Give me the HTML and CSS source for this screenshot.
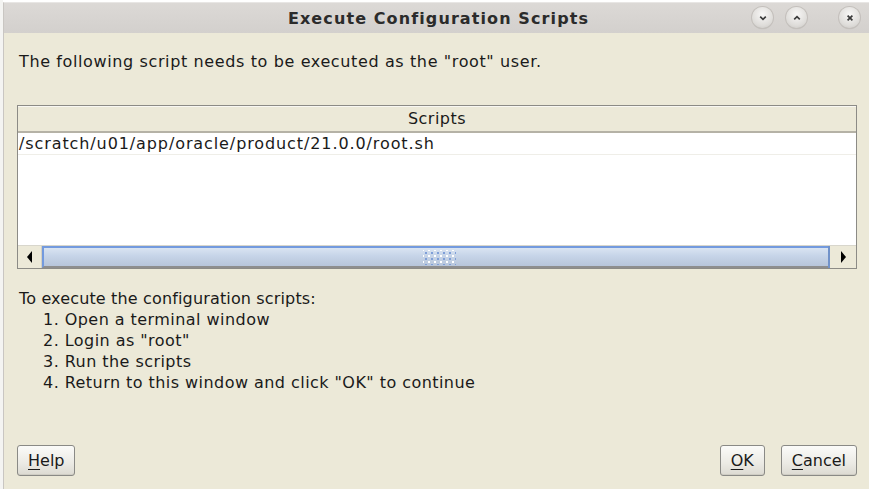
FILE: index.html
```html
<!DOCTYPE html>
<html>
<head>
<meta charset="utf-8">
<link rel="stylesheet" href="styles.css">
</head>
<body>
<div class="desk">
  <div class="strip"></div>
  <div class="window">
    <div class="titlebar">
      <div class="title">Execute Configuration Scripts</div>
      <div class="tbtns">
        <span class="tbtn"><svg width="12" height="12" viewBox="0 0 12 12"><path d="M3.2 4.6 L6 7.4 L8.8 4.6" fill="none" stroke="#3a3a3a" stroke-width="1.6"/></svg></span>
        <span class="tbtn"><svg width="12" height="12" viewBox="0 0 12 12"><path d="M3.2 7.4 L6 4.6 L8.8 7.4" fill="none" stroke="#3a3a3a" stroke-width="1.6"/></svg></span>
        <span class="tbtn close"><svg width="12" height="12" viewBox="0 0 12 12"><path d="M3.6 3.6 L8.4 8.4 M8.4 3.6 L3.6 8.4" fill="none" stroke="#3a3a3a" stroke-width="1.7"/></svg></span>
      </div>
    </div>
    <div class="content">
      <p class="intro">The following script needs to be executed as the "root" user.</p>
      <div class="table">
        <div class="thead">Scripts</div>
        <div class="tbody">
          <div class="row">/scratch/u01/app/oracle/product/21.0.0/root.sh</div>
        </div>
        <div class="hscroll">
          <div class="sbtn"><svg width="8" height="12" viewBox="0 0 8 12"><path d="M6 0 L1 6 L6 12 Z" fill="#000"/></svg></div>
          <div class="track">
            <div class="thumb"><div class="grip"></div></div>
          </div>
          <div class="sbtn right"><svg width="8" height="12" viewBox="0 0 8 12"><path d="M2 0 L7 6 L2 12 Z" fill="#000"/></svg></div>
        </div>
      </div>
      <div class="steps">
        <div class="steps-head">To execute the configuration scripts:</div>
        <ol>
          <li>1. Open a terminal window</li>
          <li>2. Login as "root"</li>
          <li>3. Run the scripts</li>
          <li>4. Return to this window and click "OK" to continue</li>
        </ol>
      </div>
      <div class="buttons">
        <button class="btn"><u>H</u>elp</button>
        <div class="right-btns">
          <button class="btn ok"><u>O</u>K</button>
          <button class="btn"><u>C</u>ancel</button>
        </div>
      </div>
    </div>
  </div>
</div>
</body>
</html>
```
FILE: styles.css
```css
html, body {
  margin: 0;
  padding: 0;
  background: #ffffff;
  width: 869px;
  height: 489px;
  overflow: hidden;
}
.desk {
  display: flex;
  height: 489px;
}
.strip {
  width: 3px;
  background: #f4f4f2;
  flex: none;
}
.window {
  flex: 1;
  display: flex;
  flex-direction: column;
  margin-top: 2px;
  border-top: 1px solid #e8e6e4;
  border-left: 1px solid #c9c6c2;
  font-family: "DejaVu Sans", sans-serif;
  color: #1a1a1a;
}
.titlebar {
  height: 30px;
  background: linear-gradient(#dcd9d6, #d3d0cd);
  display: flex;
  align-items: center;
  justify-content: center;
  position: relative;
  flex: none;
}
.title {
  font-weight: bold;
  font-size: 16px;
  letter-spacing: 1.1px;
  color: #2b2b2b;
  margin-left: 4px;
}
.tbtns {
  position: absolute;
  right: 9px;
  top: 4px;
  display: flex;
  gap: 13px;
}
.tbtn {
  width: 21px;
  height: 21px;
  border-radius: 50%;
  background: radial-gradient(circle at 50% 35%, #f8f7f6, #dedcd9 65%, #c6c3bf);
  box-shadow: 0 0 0 1px #c4c0bc, 0 1px 1px rgba(0,0,0,0.15);
  display: flex;
  align-items: center;
  justify-content: center;
}
.tbtn.close {
  margin-left: 19px;
}
.content {
  flex: 1;
  background: #ece9d8;
  padding: 0 12px 0 13px;
  display: flex;
  flex-direction: column;
  font-size: 16px;
  letter-spacing: 0.5px;
}
.intro {
  margin: 19px 0 0 2px;
  line-height: 20px;
  letter-spacing: 0.62px;
}
.table {
  margin-top: 33px;
  border: 1px solid #8c8b86;
  background: #ffffff;
  display: flex;
  flex-direction: column;
  height: 162px;
}
.thead {
  background: #ece9d8;
  border-top: 1px solid #f8f7f2;
  border-bottom: 2px solid #b5b2a6;
  text-align: center;
  line-height: 24px;
  box-sizing: border-box;
  height: 27px;
}
.tbody {
  flex: 1;
}
.row {
  height: 22px;
  line-height: 21px;
  border-bottom: 1px solid #efeee8;
  padding-left: 1px;
  box-sizing: border-box;
  letter-spacing: 0.9px;
}
.hscroll {
  height: 23px;
  display: flex;
  border-top: 1px solid #d8d6cc;
  box-sizing: border-box;
}
.sbtn {
  width: 23px;
  background: #ece9d8;
  display: flex;
  align-items: center;
  justify-content: center;
  border-right: 1px solid #d4d1c4;
}
.sbtn.right {
  width: 26px;
  border-right: none;
  border-left: 2px solid #7192c9;
}
.track {
  flex: 1;
  display: flex;
}
.thumb {
  flex: 1;
  border-top: 2px solid #739ade;
  border-left: 2px solid #739ade;
  border-bottom: 2px solid #8e8e8e;
  background: linear-gradient(#d9e4f2, #c6d4e8 45%, #b7c5da);
  display: flex;
  align-items: center;
  justify-content: center;
}
.grip {
  width: 33px;
  height: 15px;
  margin-left: 6px;
  background-image:
    radial-gradient(circle, #7f9fd8 0.9px, transparent 1.2px),
    radial-gradient(circle, #ffffff 0.9px, transparent 1.2px);
  background-size: 6px 6px, 6px 6px;
  background-position: 0 0, 3px 3px;
}
.steps {
  margin-top: 19px;
  margin-left: 2px;
  line-height: 21px;
}
.steps-head {
  letter-spacing: 0.15px;
}
.steps ol {
  list-style: none;
  margin: 0;
  padding-left: 24px;
  letter-spacing: 0.45px;
}
.buttons {
  margin-top: auto;
  margin-bottom: 13px;
  display: flex;
  justify-content: space-between;
  align-items: center;
}
.right-btns {
  display: flex;
  gap: 16px;
}
.btn {
  font-family: "DejaVu Sans", sans-serif;
  font-size: 16px;
  color: #1a1a1a;
  height: 31px;
  padding: 0 10px;
  border: 1px solid #8a8a86;
  border-radius: 3px;
  background: linear-gradient(#fbfbf9, #ebeae4 60%, #dcdad2);
  box-shadow: inset 0 -1px 0 #cfcdc4;
}
.btn u {
  text-underline-offset: 3px;
}
.ok {
  padding: 0 10px;
}
```
